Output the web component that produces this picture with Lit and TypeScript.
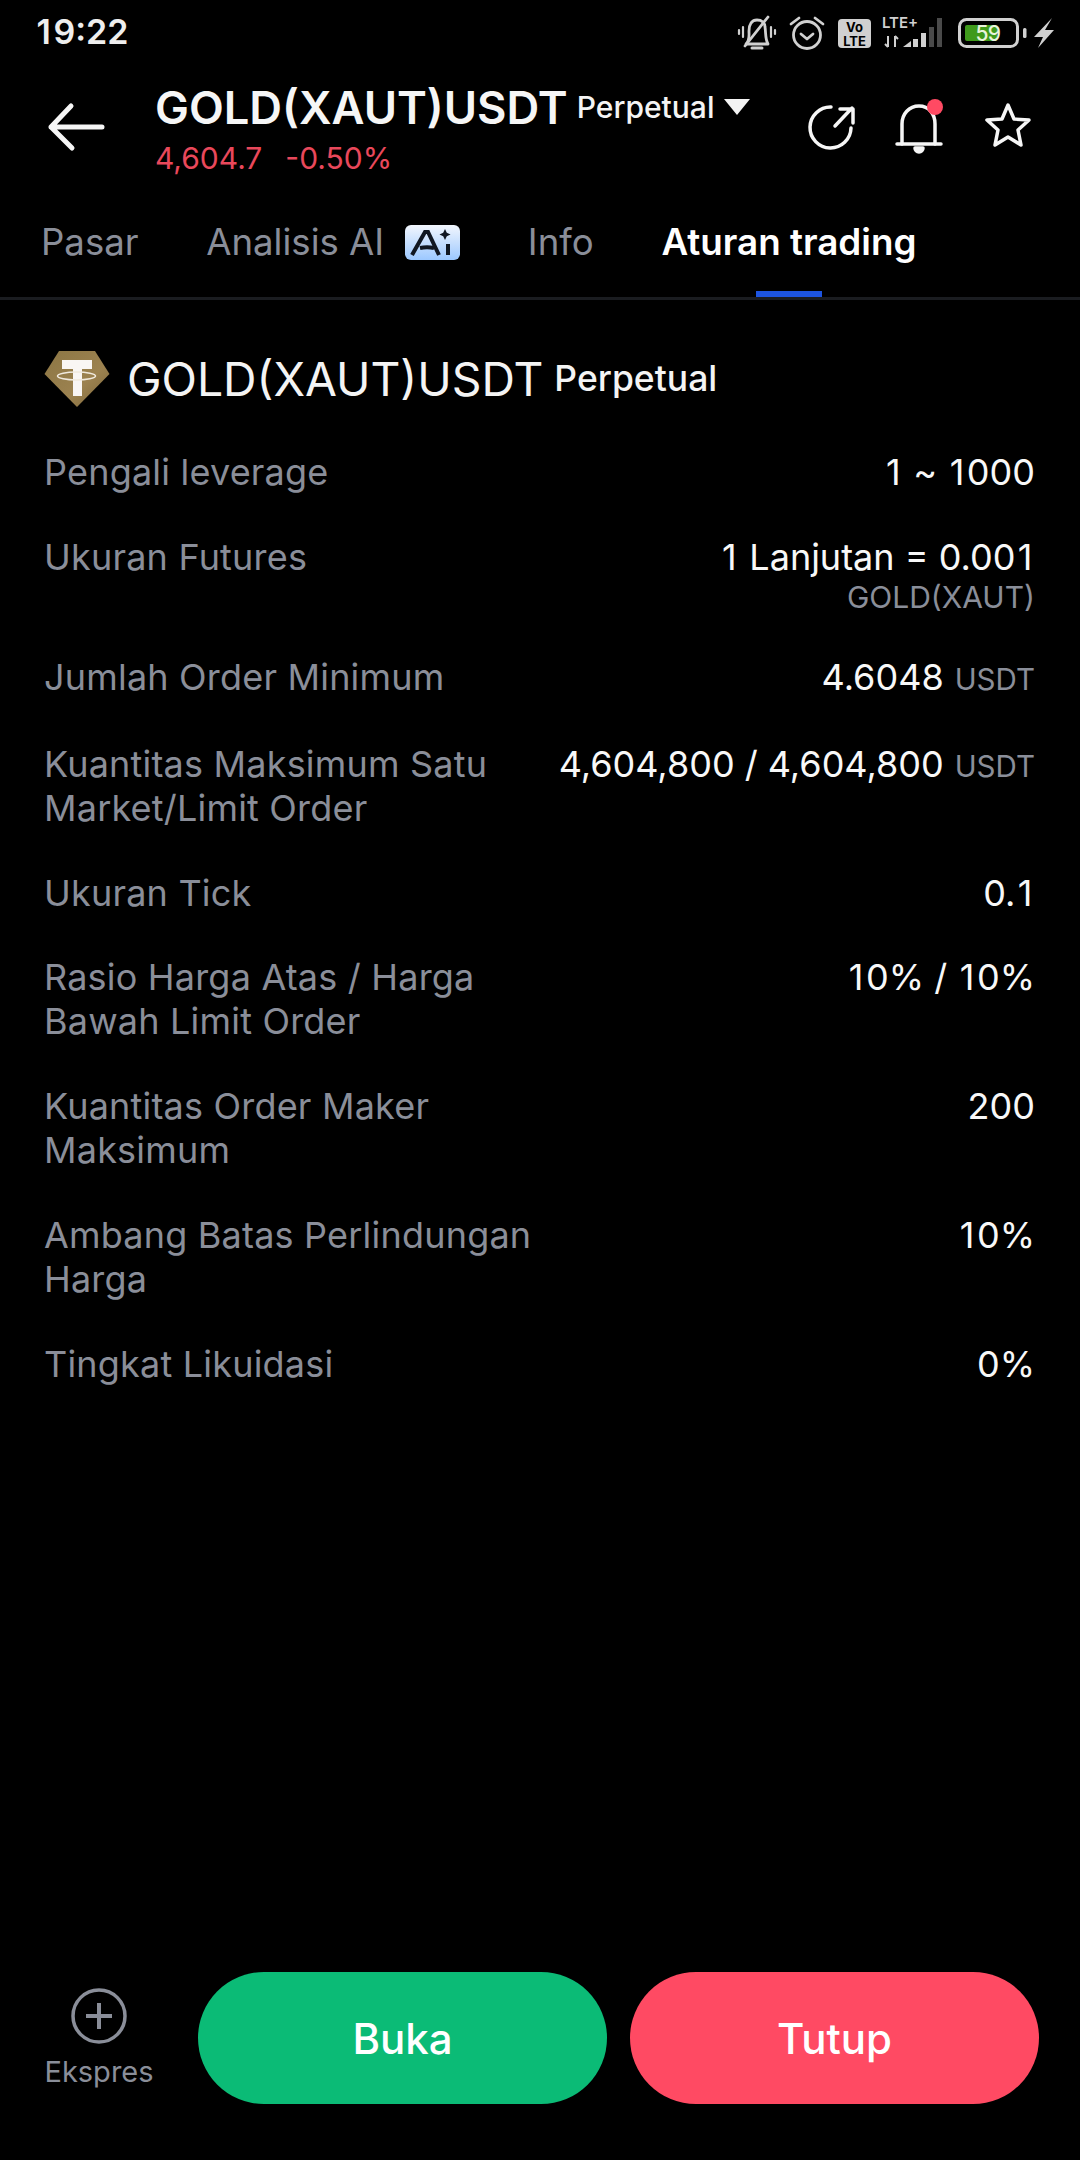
import { LitElement, html, css } from "lit";
import { customElement } from "lit/decorators.js";

const rows: { l: string[]; v: string; unit?: string; sub?: string }[] = [
  { l: ["Pengali leverage"], v: "1 ~ 1000" },
  { l: ["Ukuran Futures"], v: "1 Lanjutan = 0.001", sub: "GOLD(XAUT)" },
  { l: ["Jumlah Order Minimum"], v: "4.6048", unit: "USDT" },
  { l: ["Kuantitas Maksimum Satu", "Market/Limit Order"], v: "4,604,800 / 4,604,800", unit: "USDT" },
  { l: ["Ukuran Tick"], v: "0.1" },
  { l: ["Rasio Harga Atas / Harga", "Bawah Limit Order"], v: "10% / 10%" },
  { l: ["Kuantitas Order Maker", "Maksimum"], v: "200" },
  { l: ["Ambang Batas Perlindungan", "Harga"], v: "10%" },
  { l: ["Tingkat Likuidasi"], v: "0%" },
];

/* The reference font draws the digit 1 wider than Inter's proportional 1. */
const ones = (s: string) =>
  s.split("1").map((part, i) => (i === 0 ? part : html`<span class="one">1</span>${part}`));

@customElement("app-root")
export class AppRoot extends LitElement {
  static styles = css`
    :host {
      display: flex;
      flex-direction: column;
      width: 1080px;
      height: 2160px;
      background: #000;
      color: #fff;
      font-family: Inter, "Noto Sans", sans-serif;
      overflow: hidden;
    }
    .one { padding: 0 2.500px; }
    .status {
      height: 60px;
      flex: none;
      display: flex;
      align-items: center;
      justify-content: space-between;
      padding: 4px 0 0 34px;
      box-sizing: border-box;
    }
    .time {
      font-size: 34px;
      font-weight: 600;
      color: #eee;
      line-height: 60px;
    }
    .status svg { display: block; margin-top: -4px; }
    .head {
      height: 112px;
      flex: none;
      display: flex;
      align-items: flex-start;
    }
    .back { margin: 37px 0 0 45px; width: 60px; height: 60px; flex: none; }
    .titles { margin-left: 50px; flex: none; width: 632px; padding-top: 25px; }
    .tline { display: flex; align-items: center; height: 46px; }
    .tname { font-size: 45.300px; font-weight: 600; line-height: 46px; color: #f6f6f6; }
    .tperp { font-size: 30px; font-weight: 500; margin-left: 9px; margin-top: -3px; color: #f4f4f4; }
    .tri {
      width: 0; height: 0; margin-left: 10px; margin-top: -3px;
      border-left: 13px solid transparent;
      border-right: 13px solid transparent;
      border-top: 16px solid #f4f4f4;
    }
    .price {
      display: flex;
      gap: 23px;
      font-size: 30px;
      line-height: 36px;
      color: #e9485b;
      margin-top: 9px;
    }
    .actions { display: flex; }
    .actions svg { display: block; flex: none; }
    .tabs {
      height: 125px;
      flex: none;
      display: flex;
      align-items: flex-start;
      gap: 67.700px;
      padding-left: 41px;
      border-bottom: 3px solid #1a1c20;
    }
    .tab {
      font-size: 36.600px;
      line-height: 44px;
      color: #8a8e99;
      display: flex;
      gap: 21px;
      position: relative;
      height: 125px;
      padding-top: 48px;
      box-sizing: border-box;
      flex: none;
    }
    .tab.on { color: #fff; font-weight: 600; font-size: 36.800px; }
    .tab.on::after {
      content: "";
      position: absolute;
      left: 50%;
      margin-left: -33px;
      width: 66px;
      height: 6px;
      bottom: 0;
      background: #1d54e0;
    }
    .ai { margin-top: 5px; display: block; }
    .sec {
      display: flex;
      align-items: center;
      padding: 47px 0 0 44px;
      height: 64px;
      flex: none;
    }
    .sec svg { flex: none; display: block; }
    .sname { font-size: 46.300px; margin-left: 17px; color: #f4f4f4; }
    .sperp { font-size: 35.500px; font-weight: 500; margin-left: 11px; color: #f4f4f4; margin-top: -2px; }
    .list {
      display: flex;
      flex-direction: column;
      gap: 40.700px;
      padding: 39px 45px 0 44px;
      flex: 1;
      min-height: 0;
    }
    .row { display: flex; justify-content: space-between; gap: 20px; }
    .lab { font-size: 36px; line-height: 44px; color: #8a8e99; flex: none; letter-spacing: 0.2px; }
    .lab div { white-space: nowrap; }
    .val {
      font-size: 36px;
      line-height: 44px;
      text-align: right;
      color: #f8f8f8;
      white-space: nowrap;
    }
    .unit { font-size: 29.500px; color: #8a8e99; margin-left: 11px; }
    .sub { font-size: 30px; line-height: 36px; color: #8a8e99; }
    .foot {
      flex: none;
      display: flex;
      padding: 0 41px 56px 0;
      align-items: flex-start;
      gap: 23px;
    }
    .ex {
      width: 198px;
      flex: none;
      display: flex;
      flex-direction: column;
      align-items: center;
      padding-top: 16px;
      box-sizing: border-box;
      color: #8a8e99;
      font-size: 29px;
      line-height: 36px;
    }
    .ex svg { display: block; margin-bottom: 10px; }
    .btn {
      flex: 1;
      height: 132px;
      border-radius: 66px;
      display: flex;
      align-items: center;
      justify-content: center;
      font-size: 42px;
      font-weight: 500;
      color: #fff;
    }
    .buy { background: #0bbb76; margin-left: -23px; }
    .sell { background: #ff4a63; }
  `;

  statusIcons() {
    const c = "#d0d0d0";
    return html`<svg width="350" height="60" viewBox="730 0 350 60" fill="none">
      <g stroke=${c} stroke-width="2.800" fill="none" stroke-linecap="round" stroke-linejoin="round">
        <path d="M746 44c4-4 3-8 3-13 0-7 3-11 8-11s8 3 8 7c1 6 0 12 3 17z" />
        <path d="M745 46L768 17" />
        <path d="M752 48h10" stroke-width="3" />
        <path d="M743 27v10M739 30v4M771 27v10M775 30v4" stroke-width="2.200" />
      </g>
      <g stroke=${c} stroke-width="2.800" fill="none" stroke-linecap="round" stroke-linejoin="round">
        <circle cx="807" cy="35" r="13.500" />
        <path d="M801 34l6 5 6-5" />
        <path d="M799 18l-8 6M815 18l8 6" />
      </g>
      <rect x="838" y="19" width="33" height="29" rx="4" fill=${c} />
      <text x="854.500" y="32" text-anchor="middle" font-family="Inter" font-weight="700" font-size="13" fill="#000">Vo</text>
      <text x="854.500" y="45.500" text-anchor="middle" font-family="Inter" font-weight="700" font-size="13" fill="#000">LTE</text>
      <text x="882" y="28" font-family="Inter" font-weight="600" font-size="15" fill=${c}>LTE+</text>
      <path d="M888 36v11m-3-3l3 3M895 47V36m3 3l-3-3" stroke=${c} stroke-width="2" fill="none"/>
      <path d="M903 47l8-6v6z" fill=${c} />
      <rect x="913" y="39" width="5" height="8" fill=${c} />
      <rect x="921" y="33" width="5" height="14" fill=${c} />
      <rect x="929" y="27" width="5" height="20" fill="#4a4a4a" />
      <rect x="937" y="18" width="5" height="29" fill="#4a4a4a" />
      <rect x="959.500" y="19.500" width="58" height="27" rx="7" stroke=${c} stroke-width="3" />
      <rect x="965" y="25" width="32" height="16" rx="2" fill="#3f9a1b" />
      <text x="988" y="41" text-anchor="middle" font-family="Inter" font-weight="500" font-size="21" fill="#e8f4dc" letter-spacing="-0.5">59</text>
      <rect x="1023" y="28" width="3.500" height="10" rx="1.500" fill=${c} />
      <path d="M1052 18l-18 19h9l-5 11 16-18h-9z" fill=${c} />
    </svg>`;
  }

  ai() {
    return html`<svg class="ai" width="55" height="35" viewBox="0 0 55 35">
      <defs>
        <linearGradient id="aig" x1="0" y1="0" x2="0" y2="1">
          <stop offset="0" stop-color="#f2f6fd" />
          <stop offset="1" stop-color="#9cc8ff" />
        </linearGradient>
      </defs>
      <rect width="55" height="35" rx="6" fill="url(#aig)" />
      <path d="M7 30L20 7h3l11 23M15 23c5-1 9-1 14 0" stroke="#111722" stroke-width="4" fill="none" />
      <path d="M43 30V19" stroke="#111722" stroke-width="4" />
      <path d="M40 4l1.800 3.700 3.700 1.800-3.700 1.800-1.800 3.700-1.800-3.700-3.700-1.800 3.700-1.800z" fill="#111722" />
    </svg>`;
  }

  logo() {
    return html`<svg width="66" height="58" viewBox="0 0 66 58">
      <defs>
        <linearGradient id="gold" x1="0" y1="0" x2="1" y2="1">
          <stop offset="0" stop-color="#8c7644" />
          <stop offset="0.6" stop-color="#9c8250" />
          <stop offset="1" stop-color="#7c6538" />
        </linearGradient>
      </defs>
      <path d="M15 1h36l14.500 23L33 57 .5 24z" fill="url(#gold)" />
      <path d="M18 10h30v9H38v27h-9V19H18z" fill="#f9f6f4" />
      <ellipse cx="32.500" cy="26" rx="19" ry="4" fill="none" stroke="#f0e9dd" stroke-width="1.500" />
    </svg>`;
  }

  render() {
    return html`
      <div class="status">
        <span class="time">${ones("19:22")}</span>
        ${this.statusIcons()}
      </div>
      <div class="head">
        <svg class="back" viewBox="0 0 60 60" fill="none" stroke="#f6f6f6" stroke-width="5" stroke-linecap="round" stroke-linejoin="round">
          <path d="M57 30H6M26 9L6 30l21 21" />
        </svg>
        <div class="titles">
          <div class="tline">
            <span class="tname">GOLD(XAUT)USDT</span>
            <span class="tperp">Perpetual</span>
            <span class="tri"></span>
          </div>
          <div class="price"><span>4,604.7</span><span>-0.50%</span></div>
        </div>
        <div class="actions">
          <svg width="88" height="112" viewBox="0 0 88 112" fill="none" stroke="#f6f6f6" stroke-width="3.500" stroke-linecap="round" stroke-linejoin="round">
            <path d="M44 47a20.500 20.500 0 1 0 20 21" />
            <path d="M48 66l17-18M53 49h13v14" />
          </svg>
          <svg width="88" height="112" viewBox="0 0 88 112" fill="none" stroke="#f6f6f6" stroke-width="3.500" stroke-linecap="round" stroke-linejoin="round">
            <path d="M27 84V64c0-10 7-18 17-18s16 8 16 18v20" />
            <path d="M22 84h44" />
            <path d="M40 88h8a4 4 0 0 1-8 0z" fill="#f6f6f6" />
            <circle cx="60" cy="47" r="8" fill="#ff4a63" stroke="none" />
          </svg>
          <svg width="88" height="112" viewBox="0 0 88 112" fill="none" stroke="#f6f6f6" stroke-width="3.500" stroke-linecap="round" stroke-linejoin="round">
            <path d="M45 45l6 14 15 1-11 10 3 15-13-8-13 8 3-15-11-10 15-1z" />
          </svg>
        </div>
      </div>
      <div class="tabs">
        <div class="tab"><span>Pasar</span></div>
        <div class="tab"><span>Analisis AI</span>${this.ai()}</div>
        <div class="tab"><span>Info</span></div>
        <div class="tab on"><span>Aturan trading</span></div>
      </div>
      <div class="sec">
        ${this.logo()}
        <span class="sname">GOLD(XAUT)USDT</span>
        <span class="sperp">Perpetual</span>
      </div>
      <div class="list">
        ${rows.map(
          (r) => html`<div class="row">
            <div class="lab">${r.l.map((t) => html`<div>${t}</div>`)}</div>
            <div class="val">
              <div>${ones(r.v)}${r.unit ? html`<span class="unit">${r.unit}</span>` : ""}</div>
              ${r.sub ? html`<div class="sub">${r.sub}</div>` : ""}
            </div>
          </div>`
        )}
      </div>
      <div class="foot">
        <div class="ex">
          <svg width="56" height="56" viewBox="0 0 56 56" fill="none" stroke="#8a8e99" stroke-width="3.500">
            <circle cx="28" cy="28" r="26" />
            <path d="M15 28h26M28 15v26" stroke-width="4" />
          </svg>
          <span>Ekspres</span>
        </div>
        <div class="btn buy">Buka</div>
        <div class="btn sell">Tutup</div>
      </div>
    `;
  }
}
